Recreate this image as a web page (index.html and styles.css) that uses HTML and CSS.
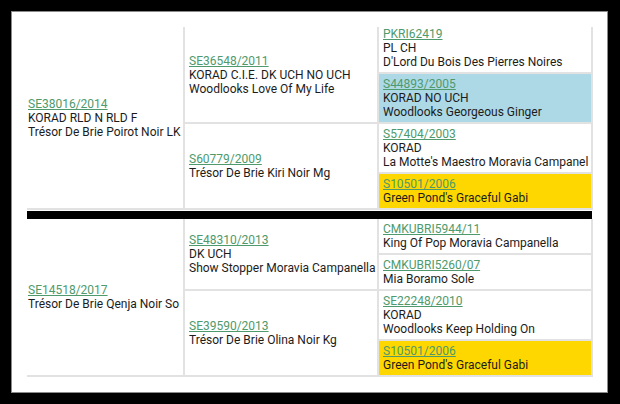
FILE: index.html
```html
<!DOCTYPE html>
<html lang="en">
<head>
    <meta charset="UTF-8">
    <title>Pedigree</title>
    <link rel="stylesheet" href="styles.css">
</head>
<body>
    <div class="panel">
        <table class="pedigree first">
            <colgroup>
                <col class="c1"><col class="c2"><col class="c3">
            </colgroup>
            <tr>
                <td class="dog" rowspan="4">
                    <a href="#">SE38016/2014</a><br>KORAD RLD N RLD F<br>Trésor De Brie Poirot Noir LK
                </td>
                <td rowspan="2">
                    <a href="#">SE36548/2011</a><br>KORAD C.I.E. DK UCH NO UCH<br>Woodlooks Love Of My Life
                </td>
                <td class="top">
                    <a href="#">PKRI62419</a><br>PL CH<br>D'Lord Du Bois Des Pierres Noires
                </td>
            </tr>
            <tr>
                <td class="blue">
                    <a href="#">S44893/2005</a><br>KORAD NO UCH<br>Woodlooks Georgeous Ginger
                </td>
            </tr>
            <tr>
                <td rowspan="2">
                    <a href="#">S60779/2009</a><br>Trésor De Brie Kiri Noir Mg
                </td>
                <td>
                    <a href="#">S57404/2003</a><br>KORAD<br>La Motte's Maestro Moravia Campanel
                </td>
            </tr>
            <tr>
                <td class="gold">
                    <a href="#">S10501/2006</a><br>Green Pond's Graceful Gabi
                </td>
            </tr>
        </table>

        <div class="divider"></div>

        <table class="pedigree second">
            <colgroup>
                <col class="c1"><col class="c2"><col class="c3">
            </colgroup>
            <tr>
                <td class="dog" rowspan="4">
                    <a href="#">SE14518/2017</a><br>Trésor De Brie Qenja Noir So
                </td>
                <td rowspan="2">
                    <a href="#">SE48310/2013</a><br>DK UCH<br>Show Stopper Moravia Campanella
                </td>
                <td>
                    <a href="#">CMKUBRI5944/11</a><br>King Of Pop Moravia Campanella
                </td>
            </tr>
            <tr>
                <td>
                    <a href="#">CMKUBRI5260/07</a><br>Mia Boramo Sole
                </td>
            </tr>
            <tr>
                <td rowspan="2">
                    <a href="#">SE39590/2013</a><br>Trésor De Brie Olina Noir Kg
                </td>
                <td>
                    <a href="#">SE22248/2010</a><br>KORAD<br>Woodlooks Keep Holding On
                </td>
            </tr>
            <tr>
                <td class="gold">
                    <a href="#">S10501/2006</a><br>Green Pond's Graceful Gabi
                </td>
            </tr>
        </table>
    </div>
</body>
</html>
```

FILE: styles.css
```css
* {
    margin: 0;
    padding: 0;
    box-sizing: border-box;
}

body {
    background: #000;
    padding: 11px;
    font-family: Roboto, "Liberation Sans", sans-serif;
    font-size: 12px;
    line-height: 14px;
    color: #1c1c1c;
}

.panel {
    width: 597px;
    height: 382px;
    background: #fff;
    border: 1px solid #8a8a8a;
    padding: 15px 15px 0 15px;
}

.pedigree {
    width: 565px;
    table-layout: fixed;
    border-collapse: collapse;
}

.c1 { width: 157px; }
.c2 { width: 194px; }
.c3 { width: 214px; }

.pedigree td {
    border: 2px solid #e2e2e2;
    padding: 3px 4px;
    vertical-align: middle;
    white-space: nowrap;
}

.pedigree td.dog {
    border-left: none;
    padding-left: 1px;
}

.pedigree tr:first-child td {
    border-top: none;
}

.pedigree td.top {
    padding-top: 0;
    padding-bottom: 3px;
}

.pedigree a {
    color: #4e9a6c;
    text-decoration: underline;
}

.blue {
    background: #add8e6;
}

.gold {
    background: #ffd700;
}

.divider {
    height: 8px;
    margin-top: 1px;
    width: 565px;
    background: #000;
}
```
